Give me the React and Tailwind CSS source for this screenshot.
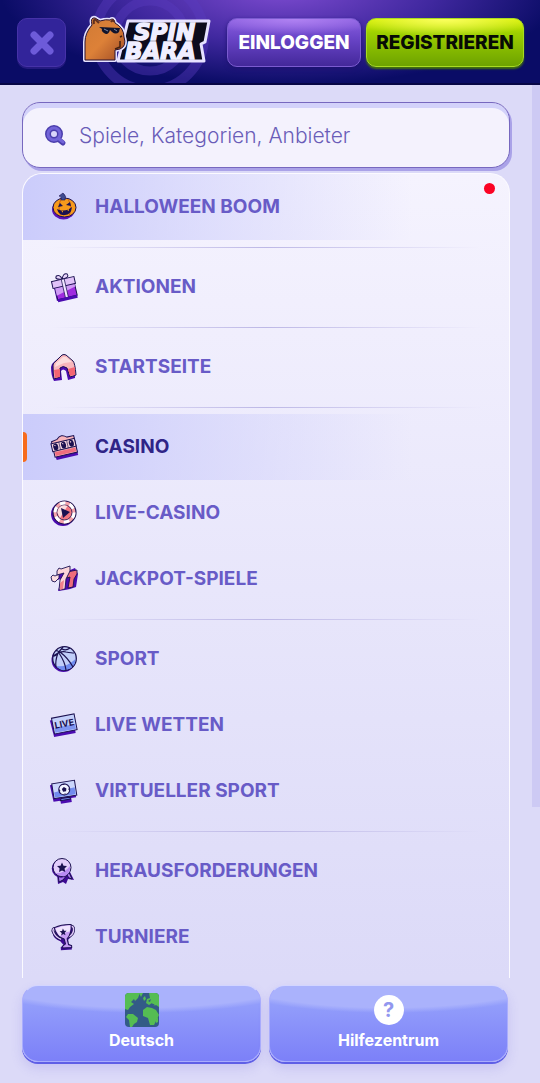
import React, { useState } from "react";

const INK = "#1b1150";

const PumpkinIcon = () => (
  <>
    <ellipse cx="12.5" cy="15.5" rx="11.5" ry="10" fill="#5a12b8" />
    <ellipse cx="13.5" cy="13.5" rx="11.5" ry="9.5" fill="#f79a1c" stroke={INK} />
    <path d="M10 5q-4 8 0 17M17 5q5 8 1 17" fill="none" stroke="#c96412" />
    <path d="M10 6q1-4-2-4l4-3q4 3 2 7z" fill="#3f4b8f" stroke={INK} strokeWidth=".6" />
    <path d="M7 13l2-4 3 3zM15 11l4-3 1 4zM6 15q8 4 15-2-1 8-7 8-6 1-8-6z" fill={INK} />
    <path d="M10 16.500l2 .3v2zM16 16l2-1v2z" fill="#f79a1c" />
  </>
);

const GiftIcon = () => (
  <g transform="rotate(-13 13 13)">
    <path d="M3 10h20v15H3z" fill="#4b0bb0" />
    <path d="M4 10h20v14H4z" fill="#a02be0" stroke={INK} />
    <path d="M4 12h20v3L4 20z" fill="#cf9af5" />
    <path d="M2 5h23v7H2z" fill="#e0c2f8" stroke={INK} />
    <path d="M13 5Q5 4 8 .5q4-1 5 4.500 2-6 6-4 2 4-6 4" fill="#e8d6fb" stroke={INK} />
    <path d="M12 5h3v19h-3z" fill="#f1e6ff" stroke={INK} strokeWidth=".7" />
    <path d="M4 25h20" stroke="#4b0bb0" strokeWidth="3" />
  </g>
);

const HomeIcon = () => (
  <g strokeLinejoin="round">
    <path d="M0 13Q0 10 3 8l7-6q3 0 7 3l5 5q3 4 2 14l-7 2-2-9q-3-3-5 0l1 9-8 1Q0 22 0 13z" fill="#4b0bb0" />
    <path d="M2 11q0-2 3-4l6-6q2-1 4 0l7 6q2 2 3 14l-6 2-3-9q-4-3-7 0v9l-6 2Q2 20 2 11z" fill="#f8b6bb" stroke={INK} />
    <path d="M3 16l6-1v8l-5 1zM17 15l7-2v8l-5 1z" fill="#f36571" />
    <path d="M5 9l7-6 3 0 6 5-8 1-9 4z" fill="#fcdcdd" />
  </g>
);

const SlotIcon = () => (
  <g transform="rotate(-13 13 13)">
    <path d="M1 6h24v18H3z" fill="#4b0bb0" />
    <path d="M2 5l6-1q5-5 10 0h7v17H2z" fill="#f8b4bb" stroke={INK} />
    <path d="M3 16h21v4H3z" fill="#ef6e7e" />
    <path d="M1 7h24v8H1z" fill="#f7d7df" stroke={INK} />
    <path d="M9 7v8M17 7v8" stroke={INK} strokeWidth=".6" />
    <ellipse cx="5" cy="11" rx="2.500" ry="3.500" fill={INK} />
    <ellipse cx="13" cy="11" rx="2.500" ry="3.500" fill={INK} />
    <ellipse cx="21" cy="11" rx="2.500" ry="3.500" fill={INK} />
    <path d="M4 9l1 1M12 9l1 1M20 9l1 1" stroke="#f7d7df" />
  </g>
);

const ChipIcon = () => (
  <>
    <circle cx="12" cy="14" r="12" fill="#4b0bb0" />
    <circle cx="13.500" cy="12.500" r="11.500" fill="#f4a3ab" stroke={INK} strokeWidth="1.200" />
    <circle cx="13.500" cy="12.500" r="9.300" fill="none" stroke="#fff" strokeWidth="3.500" strokeDasharray="5.500 4.240" />
    <circle cx="13.500" cy="12.500" r="7.500" fill="#f2757f" stroke={INK} strokeWidth=".8" />
    <path d="M6.500 13a7 7 0 0 1 10-7L9 18z" fill="#fbdcdd" />
    <path d="M10 8l9 4-7 6z" fill={INK} />
  </>
);

const SevensIcon = () => (
  <g strokeLinejoin="round">
    <path d="M7 9l-1 5 4-1-3 12 7-1 5-1 6-2 2-13-3-6z" fill="#4b0bb0" />
    <path d="M0 11l2-2 2 1 4-2v4l-4 4-3-1z" fill="#fbdde0" stroke={INK} strokeWidth=".9" />
    <path d="M16 6l10-2v4l-3 5-1 8-5 1 2-11-3 1z" fill="#ef6d7c" stroke={INK} strokeWidth=".9" />
    <path d="M6 5l2-3 2 1 9-3v5l-4 8-1 10-6 1 1-10 4-7-7 2z" fill="#fbd5d9" stroke={INK} strokeWidth=".9" />
    <path d="M9 17l4-3-1 9-3 1z" fill="#f0818c" />
  </g>
);

const BasketballIcon = () => (
  <>
    <circle cx="12.500" cy="14" r="12" fill="#4b0bb0" />
    <circle cx="13.500" cy="12.500" r="11.800" fill="#c1cef9" stroke={INK} strokeWidth="1.300" />
    <path d="M24.500 13A11 11 0 0 1 5 20q10 2 19.500-7z" fill="#718cf1" />
    <path d="M2 10l5-3 5-6M7 7q5-2 8-1 6 1 8 1M7 7q-3 8-2 14M8 6q-2-2-3-1M9 6q8 6 13 15M8 7q6 9 7 17M11 3q4 2 8-1M2 10q2 1 5-3" fill="none" stroke={INK} strokeWidth="1.200" />
  </>
);

const LiveIcon = () => (
  <g transform="rotate(-11 13 13)">
    <path d="M0 6h23v17H1z" fill="#4b0bb0" />
    <path d="M2 4h23v16H2z" fill="#c3d0fb" stroke={INK} />
    <path d="M3 14h21v5H3z" fill="#7f95f1" />
    <text x="13.500" y="15" textAnchor="middle" fontSize="9" fontWeight="700" fontFamily="Inter, sans-serif" fill={INK}>LIVE</text>
  </g>
);

const ScreenIcon = () => (
  <g transform="rotate(-9 13 13)">
    <path d="M0 5h24v16h-5v4H8v-3H1z" fill="#4b0bb0" />
    <path d="M2 4h23v15H2z" fill="#cbd6fc" stroke={INK} />
    <path d="M3 13l21-2v7H3z" fill="#728bee" />
    <path d="M9 20h9v2H8z" fill="#728bee" stroke={INK} />
    <circle cx="13.500" cy="11.500" r="5.500" fill="#f2f4ff" stroke={INK} />
    <path d="M13.500 9l2.300 1.800-.8 2.700h-3l-.8-2.700zM11 6l2.500 1L16 6zM8 10l1.500 2-1 2zM19 10l-1.500 2 1 2zM11 16.500l2.500-1 2 1z" fill={INK} />
  </g>
);

const MedalIcon = () => (
  <g strokeLinejoin="round">
    <path d="M6 16l1 10 5-2 3 2 2-5 6 1-5-10z" fill="#3d0a92" />
    <path d="M7 16l1 8 4-2 4-5 2 3 3 1-4-9z" fill="#a976ec" stroke={INK} />
    <circle cx="10" cy="10.500" r="9.200" fill="#3d0a92" />
    <circle cx="11" cy="9.500" r="9" fill="#e2cdfb" stroke={INK} />
    <path d="M4 15q9 1 15-7 1 7-5 10-5 1-10-3z" fill="#b98bf2" />
    <path d="M11 4.500l1.500 3.200 3.500.3-2.500 2.500.8 3.500-3.300-1.600L8 14l.6-3.500L6 8l3.500-.3z" fill={INK} />
  </g>
);

const TrophyIcon = () => (
  <g strokeLinejoin="round" transform="rotate(-4 13 13)">
    <path d="M2 8q0 6 7 9l3 4-3 2v3h11v-4l-3-2v-4q7-5 6-12z" fill="#3d0a92" />
    <path d="M6 4Q1 3 3 8q2 5 7 7M19 3q5-1 4 4-1 5-6 6" fill="none" stroke={INK} strokeWidth="3" />
    <path d="M6 4Q1 3 3 8q2 5 7 7M19 3q5-1 4 4-1 5-6 6" fill="none" stroke="#e0c8fa" strokeWidth="1.500" />
    <path d="M4 3q8-3 17-2 0 9-5 14l1 6 3 1v2h-9v-2l3-2-1-5Q5 12 4 3z" fill="#c79df5" stroke={INK} />
    <path d="M5 4q8-3 15-2 0 4-1 6-6 0-10 4-3-4-4-8z" fill="#f0e4fe" />
    <path d="M12.500 4.500l1 2.300 2.500.2-2 1.800.6 2.500-2.100-1.300-2.200 1.300.7-2.500L9 7l2.500-.2z" fill={INK} />
  </g>
);

const groups = [
  [{ label: "HALLOWEEN BOOM", icon: PumpkinIcon, promo: true }],
  [{ label: "AKTIONEN", icon: GiftIcon }],
  [{ label: "STARTSEITE", icon: HomeIcon }],
  [
    { label: "CASINO", icon: SlotIcon, active: true },
    { label: "LIVE-CASINO", icon: ChipIcon },
    { label: "JACKPOT-SPIELE", icon: SevensIcon },
  ],
  [
    { label: "SPORT", icon: BasketballIcon },
    { label: "LIVE WETTEN", icon: LiveIcon },
    { label: "VIRTUELLER SPORT", icon: ScreenIcon },
  ],
  [
    { label: "HERAUSFORDERUNGEN", icon: MedalIcon },
    { label: "TURNIERE", icon: TrophyIcon },
  ],
];

const Logo = () => (
  <svg viewBox="0 0 130 50" className="w-[130px] h-[50px]" role="img" aria-label="Spinbara">
    <defs>
      <linearGradient id="fur" x1="0" y1="0" x2="1" y2="1">
        <stop offset="0" stopColor="#d07a35" />
        <stop offset=".5" stopColor="#dd8138" />
        <stop offset="1" stopColor="#9e4b25" />
      </linearGradient>
    </defs>
    <path d="M46 7h81l-4 21-4 2 3 17H36z" fill="#0c0c1d" stroke="#e6e2ff" strokeWidth="3" strokeLinejoin="round" />
    <g
      fontFamily="'DejaVu Sans', sans-serif" fontWeight="bold" fontStyle="italic" fontSize="23"
      fill="#f0efff" stroke="#f0efff" strokeWidth="1.500"
    >
      <text x="52" y="26">SPIN</text>
      <text x="43" y="45">BARA</text>
    </g>
    <path
      d="M3 46V28q0-9 7-17Q8 3 13 4l5 3q6-2 10-1 4-3 5 3 9 5 9 14 3 9-4 12l-5 1v10z"
      fill="url(#fur)" stroke="#e6e2ff" strokeWidth="4" strokeLinejoin="round"
    />
    <path
      d="M3 46V28q0-9 7-17Q8 3 13 4l5 3q6-2 10-1 4-3 5 3 9 5 9 14 3 9-4 12l-5 1v10z"
      fill="url(#fur)" stroke="#2a1330" strokeWidth="1" strokeLinejoin="round"
    />
    <path d="M12 10q-1-5 2-4l3 3M29 8q2-3 3 0" fill="none" stroke="#61301f" strokeWidth="2" />
    <path d="M17 13l21 1-1 4q-3 3-7 0l-2-2q-2 6-6 3-3-2-2-4z" fill="#11142c" />
    <path d="M22 15l4 2M32 15l3 2" stroke="#7d8ba9" />
    <path d="M38 23l2-1M38 27v6l-5 2" fill="none" stroke="#43200f" strokeWidth="1.500" />
  </svg>
);

const HeaderRings = () => (
  <svg viewBox="0 0 540 85" preserveAspectRatio="xMinYMin slice" className="absolute inset-0 w-full h-full" aria-hidden="true">
    <g fill="none" stroke="#5a3cc0" opacity=".4">
      <circle cx="150" cy="36" r="54" strokeWidth="10" />
      <circle cx="150" cy="36" r="35" strokeWidth="9" />
    </g>
  </svg>
);

const EarthIcon = () => (
  <svg viewBox="0 0 34 34" className="w-[34px] h-[34px] rounded-sm" aria-hidden="true">
    <path d="M0 0h34v34H0z" fill="#335b87" />
    <g fill="#55bd53">
      <path d="M0 0h15l-2 5-3 3-1-2-3 3 3 2-4 3-2 3-3-1zM3 21l5 0 5 4-1 4-3 2-2 3H5l-1-7-3-3z" />
      <path d="M24 0h10v14l-3-2-2 1-2-3-3 2-3-2 1-4 3-1zM18 17l4-3 5 1 4 2 3 5-5 10h-4l-2-7-5-2z" />
      <path d="M18 5l2-2 1 3-2 2zM31 27l2-3v5l-2 1zM14 0h4l-2 4z" />
    </g>
    <path d="M23 8l3-2-1 3zM26 11h3l1 2-3-1z" fill="#335b87" />
  </svg>
);

const MenuItem = ({ item, active, onSelect }) => {
  const Icon = item.icon;
  return (
    <a
      href="#"
      aria-current={active ? "page" : undefined}
      onClick={(e) => {
        e.preventDefault();
        onSelect(item.label);
      }}
      className={`relative flex items-center h-[66px] pl-7 pr-4 gap-[18px] text-[19px] leading-6 font-bold ${
        active ? "text-[#2f2487]" : "text-[#685bc7]"
      } ${active || item.promo ? "bg-linear-to-r from-[#cbccfb] to-[#cbccfb]/0 to-80%" : ""}`}
    >
      {active && <span className="absolute left-0 top-[18px] w-1 h-[30px] rounded-r-sm bg-[#f76b1c]" />}
      <svg viewBox="0 0 26 26" className="w-[26px] h-[26px] shrink-0 overflow-visible" aria-hidden="true">
        <Icon />
      </svg>
      <span>{item.label}</span>
      {item.promo && <span className="absolute right-[14px] top-[9px] size-[11px] rounded-full bg-[#fb0324]" />}
    </a>
  );
};

const footerButton =
  "flex-1 h-[77px] flex flex-col items-center pt-[7px] rounded-[16px] text-white text-[16px] leading-5 font-bold border border-[#a9adfd] border-t-[#d3d5ff] shadow-[0_2px_0_#5f5fe6,0_6px_12px_rgba(110,100,220,0.2)] bg-[radial-gradient(ellipse_100%_67px_at_50%_-40px,#aab2fc_92%,transparent_100%),linear-gradient(to_bottom,#929dfb_25%,#7c80f8)]";

const App = () => {
  const [search, setSearch] = useState("");
  const [current, setCurrent] = useState("CASINO");

  return (
    <div className="relative min-h-screen flex flex-col bg-[#dcdaf8] font-['Inter',sans-serif]">
      {/* Header */}
      <header className="relative h-[85px] border-b-2 border-[#070646] bg-[radial-gradient(ellipse_52%_115%_at_52%_-12%,#7d4bd0,#40289f_55%,#0a0c66)]">
        <HeaderRings />
        <div className="relative flex items-start pl-[17px] pr-4 pt-[18px]">
          <button
            aria-label="Schließen"
            className="size-[49px] flex items-center justify-center rounded-[10px] bg-[#32249a] border border-[#4632a8] shadow-[0_2px_0_#241a80]"
          >
            <svg viewBox="0 0 26 26" className="w-[26px] h-[26px]" aria-hidden="true">
              <path d="M5 5l16 16M21 5L5 21" stroke="#6d5bd9" strokeWidth="7" strokeLinecap="round" />
            </svg>
          </button>
          <a href="#" className="ml-4 -mt-1 shrink-0">
            <Logo />
          </a>
          <div className="flex flex-1 justify-end gap-[5px] text-[19px] leading-6 font-extrabold">
            <button className="w-[134px] h-[49px] rounded-[10px] text-white border border-[#7b5bd0] bg-[radial-gradient(ellipse_70%_16px_at_50%_0,#b082f2,transparent),linear-gradient(to_bottom,#8a5ee0,#6a45c8_40%,#43289a)] shadow-[0_2px_4px_#1c1270]">
              EINLOGGEN
            </button>
            <button className="w-[158px] h-[49px] rounded-[10px] text-[#070b05] border border-[#a8dc20] bg-[radial-gradient(ellipse_60%_18px_at_50%_0,#fbff60,transparent),linear-gradient(to_bottom,#d6f000,#9dd000_30%,#6da200)] shadow-[0_2px_2px_#43700c]">
              REGISTRIEREN
            </button>
          </div>
        </div>
      </header>

      <main className="flex-1 flex flex-col pl-[22px] pr-[30px] pt-[17px]">
        {/* Search */}
        <div className="flex items-center h-[66px] pl-[22px] pr-4 pt-0.5 gap-3 rounded-[18px] border border-[#7768bf] bg-[#f4f2fd] shadow-[inset_0_5px_0_#d3d2fa,2px_3px_0_#aaa2e8]">
          <svg viewBox="0 0 22 22" className="w-[22px] h-[22px] shrink-0" aria-hidden="true">
            <path d="M13 14l5 4" stroke="#4b3ead" strokeWidth="5" strokeLinecap="round" />
            <circle cx="9" cy="9" r="6" fill="#d9d5fb" stroke="#4b3ead" strokeWidth="6" />
            <circle cx="9" cy="9" r="6" fill="none" stroke="#7264d8" strokeWidth="3" />
            <path d="M14 14l4 3" stroke="#7264d8" strokeWidth="3" strokeLinecap="round" />
          </svg>
          <input
            type="text"
            aria-label="Suche"
            value={search}
            onChange={(e) => setSearch(e.target.value)}
            placeholder="Spiele, Kategorien, Anbieter"
            className="flex-1 min-w-0 bg-transparent outline-none text-[21px] leading-7 font-light text-[#5c4fae] placeholder:text-[#6a5db8]"
          />
        </div>

        {/* Menu */}
        <nav className="mt-[5px] flex-1 pb-2 overflow-hidden rounded-t-[20px] border border-b-0 border-[#fbfaff] bg-linear-to-b from-[#f5f3fe] to-[#dcdaf8]">
          {groups.map((items, i) => (
            <div key={items[0].label}>
              {i > 0 && (
                <div className="h-[14px] flex items-center px-7">
                  <div className="h-px flex-1 bg-linear-to-r from-transparent via-[#bdb8e6] to-transparent" />
                </div>
              )}
              {items.map((item) => (
                <MenuItem key={item.label} item={item} active={item.label === current} onSelect={setCurrent} />
              ))}
            </div>
          ))}
        </nav>

        {/* Footer buttons */}
        <div className="flex gap-2 pt-[7px] pb-[21px] pr-0.5">
          <button className={footerButton}>
            <EarthIcon />
            <span className="mt-[3px]">Deutsch</span>
          </button>
          <button className={footerButton}>
            <span className="size-[34px] flex items-center justify-center">
              <span className="size-[30px] rounded-full bg-white text-[#9297ef] text-[20px] leading-[30px]">?</span>
            </span>
            <span className="mt-[3px]">Hilfezentrum</span>
          </button>
        </div>
      </main>

      <div className="absolute right-0 top-[85px] w-2 h-2/3 bg-[#cdcaf4]" />
    </div>
  );
};

export default App;
